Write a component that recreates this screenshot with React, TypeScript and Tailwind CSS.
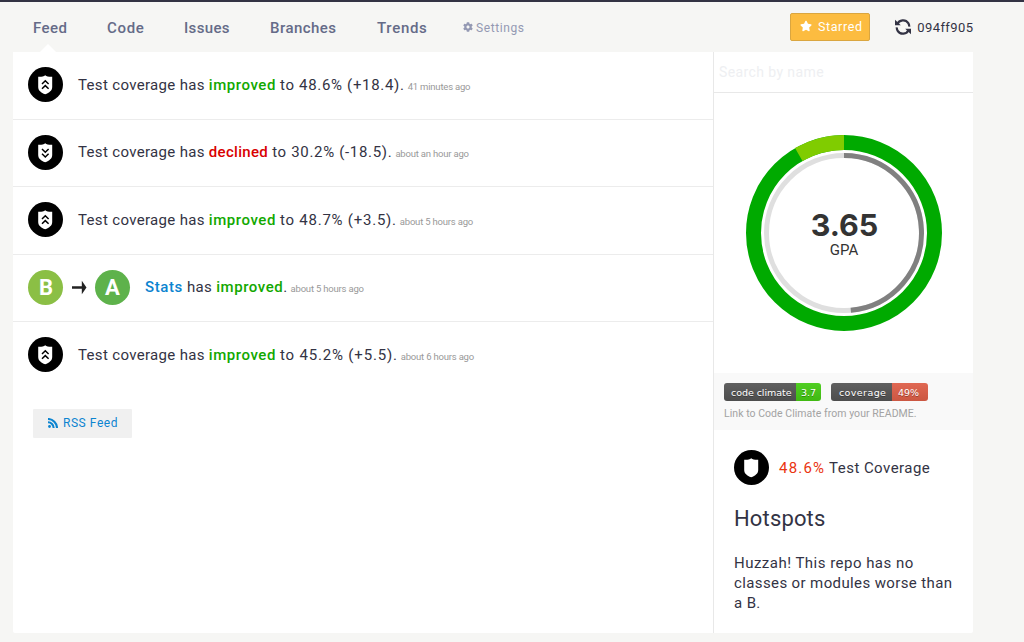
import React from "react";
import { FaCog, FaStar } from "react-icons/fa";

type Kind = "up" | "down" | "plain";

function Shield({ kind }: { kind: Kind }) {
  return (
    <svg className="block size-[35px] shrink-0" viewBox="0 0 35 35">
      <circle cx="17.5" cy="17.5" r="17.5" fill="#000" />
      <path
        d="M17.2 8.2 C15.8 9.5 13 10 10.2 9.8 V20 C10.2 23.6 13 25.6 17.2 27.3 C21.4 25.6 24.2 23.6 24.2 20 V9.8 C21.4 10 18.6 9.5 17.2 8.2Z"
        fill="#fff"
      />
      {kind === "up" && (
        <path d="M14 17 L17.3 13.8 L20.6 17 M14 21.8 L17.3 18.6 L20.6 21.8" fill="none" stroke="#000" strokeWidth="1.5" />
      )}
      {kind === "down" && (
        <path d="M14 14 L17.3 17.2 L20.6 14 M14 18.8 L17.3 22 L20.6 18.8" fill="none" stroke="#000" strokeWidth="1.5" />
      )}
    </svg>
  );
}

function Time({ children }: { children: string }) {
  return <span className="ml-[3px] text-[9.5px] tracking-[-0.2px] text-[#999]">{children}</span>;
}

interface CoverageProps {
  kind: "up" | "down";
  result: string;
  resultClass: string;
  time: string;
}

function CoverageRow({ kind, result, resultClass, time }: CoverageProps) {
  return (
    <li className="flex h-[67.5px] border-b border-[#ececec] px-[15px] pt-[15px] leading-[36px] last:border-0 even:leading-[35px]">
      <Shield kind={kind} />
      <p className="ml-[15px] whitespace-nowrap text-[15px] tracking-[0.33px]">
        Test coverage has{" "}
        <b className={kind === "up" ? "font-medium tracking-[0.55px] text-[#12a800]" : "font-medium tracking-[0.3px] text-[#d90000]"}>
          {kind === "up" ? "improved" : "declined"}
        </b>{" "}
        <span className={resultClass}>{result}</span>
        <Time>{time}</Time>
      </p>
    </li>
  );
}

function RefreshIcon() {
  return (
    <svg className="block size-[16px]" viewBox="0 0 16 16" fill="none" stroke="#333344" strokeWidth="2.2">
      <path d="M2.2 5.2 C4.2 .6 10.5 -.2 13.3 4.2 Q14.3 5.8 14.2 7.6" />
      <path d="M13.8 10.8 C11.8 15.4 5.5 16.2 2.7 11.8 Q1.7 10.2 1.8 8.4" />
      <path d="M0 .7 V6.2 H5.8Z M16 15.3 V9.8 H10.2Z" fill="#333344" stroke="none" />
    </svg>
  );
}

function FeedIcon() {
  return (
    <svg className="block size-[10px]" viewBox="0 0 10 10" fill="none" stroke="#0c84d0" strokeWidth="2.1">
      <circle cx="1.5" cy="8.5" r="1.4" fill="#0c84d0" stroke="none" />
      <path d="M0 4.3 A5.5 5.5 0 0 1 5.6 10 M0 1 A9 9 0 0 1 9 10" />
    </svg>
  );
}

export default function App() {
  return (
    <div className="h-[642px] w-[1024px] overflow-hidden border-t-2 border-[#333344] bg-[#f6f6f4] font-['Roboto',sans-serif] text-[#333344]">
      <header className="flex h-[50px] w-[973px] items-start pl-[33px]">
        <nav className="flex h-full text-[15px] font-medium leading-[52px] tracking-[0.2px] text-[#656b88]">
          <a className="relative w-[74px] tracking-[0.4px]">
            Feed
            <svg className="absolute bottom-0 left-[7px] h-[8px] w-[16px]" viewBox="0 0 16 8">
              <path d="M0 8 L8 0 L16 8Z" fill="#fff" />
            </svg>
          </a>
          <a className="w-[77px] tracking-[0.7px]">Code</a>
          <a className="w-[86px] tracking-[0.35px]">Issues</a>
          <a className="w-[107px] tracking-[0.45px]">Branches</a>
          <a className="w-[86px] tracking-[0.7px]">Trends</a>
          <a className="flex items-center gap-[3px] text-[12px] font-normal tracking-[0.6px] text-[#9499b3]">
            <FaCog className="size-[10px]" />
            <span className="pt-px">Settings</span>
          </a>
        </nav>
        <div className="ml-auto flex">
          <button className="mt-[11px] flex h-[28px] w-[80px] items-center gap-[6px] rounded-[2px] border border-[#daa640] bg-[#fcbc40] pl-[9px] text-[12.5px] tracking-[0.6px] text-white">
            <FaStar className="-mt-[2px] size-[12px]" />
            Starred
          </button>
          <div className="ml-[25px] mt-[17px] flex w-[78px] items-start justify-between">
            <RefreshIcon />
            <span className="-mr-[0.4px] pt-px text-[13px] leading-[16px] tracking-[0.4px]">094ff905</span>
          </div>
        </div>
      </header>

      <div className="ml-[13px] flex h-[581px] w-[960px] rounded-b-[2px] bg-white">
        <main className="w-[700px]">
          <ul>
            <CoverageRow kind="up" result="to 48.6% (+18.4)." resultClass="tracking-[0.68px]" time="41 minutes ago" />
            <CoverageRow kind="down" result="to 30.2% (-18.5)." resultClass="tracking-[0.68px]" time="about an hour ago" />
            <CoverageRow kind="up" result="to 48.7% (+3.5)." resultClass="tracking-[0.76px]" time="about 5 hours ago" />
            <li className="flex h-[67.5px] border-b border-[#ececec] px-[15px] pt-[15px]">
              <span className="flex size-[35px] items-center justify-center rounded-full bg-[#8bbf45] pl-px text-[22px] font-bold text-white">
                B
              </span>
              <svg className="mx-[8px] mt-[10px] h-[15px] w-[16px]" viewBox="0 0 16 15">
                <path d="M1 7.5 H13" stroke="#222" strokeWidth="2.5" />
                <path d="M10.8 .8 L15.5 7.5 L10.8 14.2Z" fill="#222" />
              </svg>
              <span className="flex size-[35px] items-center justify-center rounded-full bg-[#5eb24b] text-[22px] font-bold text-white">
                A
              </span>
              <p className="ml-[15px] whitespace-nowrap text-[15px] leading-[35px] tracking-[0.33px]">
                <b className="font-medium tracking-[0.6px] text-[#0c84d0]">Stats</b> has{" "}
                <b className="font-medium tracking-[0.55px] text-[#12a800]">improved</b>.
                <Time>about 5 hours ago</Time>
              </p>
            </li>
            <CoverageRow kind="up" result="to 45.2% (+5.5)." resultClass="tracking-[0.82px]" time="about 6 hours ago" />
          </ul>
          <a className="ml-[20px] mt-[19.5px] flex h-[29px] w-[99px] items-center gap-[5px] rounded-[1px] bg-[#f0f0f0] pb-[2px] pl-[15px] text-[12px] tracking-[0.55px] text-[#0c84d0]">
            <FeedIcon />
            RSS Feed
          </a>
        </main>

        <aside className="w-[260px] border-l border-[#e8e8e8]">
          <div className="h-[41px] border-b border-[#e8e8e8] pl-[5px]">
            <input
              className="block h-[40px] w-full bg-transparent text-[14px] tracking-[0.4px] outline-none placeholder:text-[#eeeff2]"
              placeholder="Search by name"
            />
          </div>
          <div className="grid h-[280px] place-items-center">
            <svg className="col-start-1 row-start-1 size-[196px]" viewBox="0 0 196 196" fill="none">
              <circle cx="98" cy="98" r="90.5" stroke="#00aa00" strokeWidth="15" />
              <path d="M52.75 19.62 A90.5 90.5 0 0 1 98 7.5" stroke="#80cc00" strokeWidth="15" />
              <circle cx="98" cy="98" r="77.5" stroke="#dfdfdf" strokeWidth="5" />
              <path d="M98 20.5 A77.5 77.5 0 0 1 104.8 175.2" stroke="#808080" strokeWidth="5" />
            </svg>
            <div className="col-start-1 row-start-1 pt-[4px] text-center text-[#333]">
              <div className="pl-[2px] font-['Inter',sans-serif] text-[30.5px] font-bold leading-[30px]">3.65</div>
              <div className="pl-px text-[15px] leading-[20px]">GPA</div>
            </div>
          </div>
          <div className="h-[57px] bg-[#f9f9f9] pl-[10px] pt-[10px]">
            <div className="flex gap-[10px] font-['DejaVu_Sans',sans-serif] text-[9.5px] leading-[19px] text-white [text-shadow:0_1px_0_#0005]">
              <div className="flex h-[18px] w-[97px] overflow-hidden rounded-[3px]">
                <span className="w-[72px] whitespace-nowrap bg-linear-to-b from-[#606060] to-[#4d4d4d] pl-[7px] tracking-[-0.05px]">code climate</span>
                <span className="w-[25px] bg-linear-to-b from-[#50ce22] to-[#40b912] text-center">3.7</span>
              </div>
              <div className="flex h-[18px] w-[97px] overflow-hidden rounded-[3px]">
                <span className="w-[61px] bg-linear-to-b from-[#606060] to-[#4d4d4d] pl-[8px] tracking-[0.4px]">coverage</span>
                <span className="w-[36px] bg-linear-to-b from-[#e06853] to-[#cb5742] pl-[6px]">49%</span>
              </div>
            </div>
            <p className="mt-[6px] whitespace-nowrap text-[10.5px] leading-[14px] tracking-[0.04px] text-[#a3a3a3]">Link to Code Climate from your README.</p>
          </div>
          <div className="flex items-center gap-[10px] pl-[20px] pt-[20px] text-[15px] tracking-[0.45px]">
            <Shield kind="plain" />
            <span className="pt-[2px]"><span className="tracking-[1.2px] text-[#ea3410]">48.6%</span> Test Coverage</span>
          </div>
          <h2 className="mt-[18px] pl-[20px] text-[22px] leading-[32px] tracking-[0.15px]">Hotspots</h2>
          <p className="mt-[18px] pl-[20px] text-[15px] leading-[20px] tracking-[0.38px]">
            <span className="tracking-[0.48px]">Huzzah! This repo has no</span>
            <br />
            classes or modules worse than
            <br />a B.
          </p>
        </aside>
      </div>
    </div>
  );
}
